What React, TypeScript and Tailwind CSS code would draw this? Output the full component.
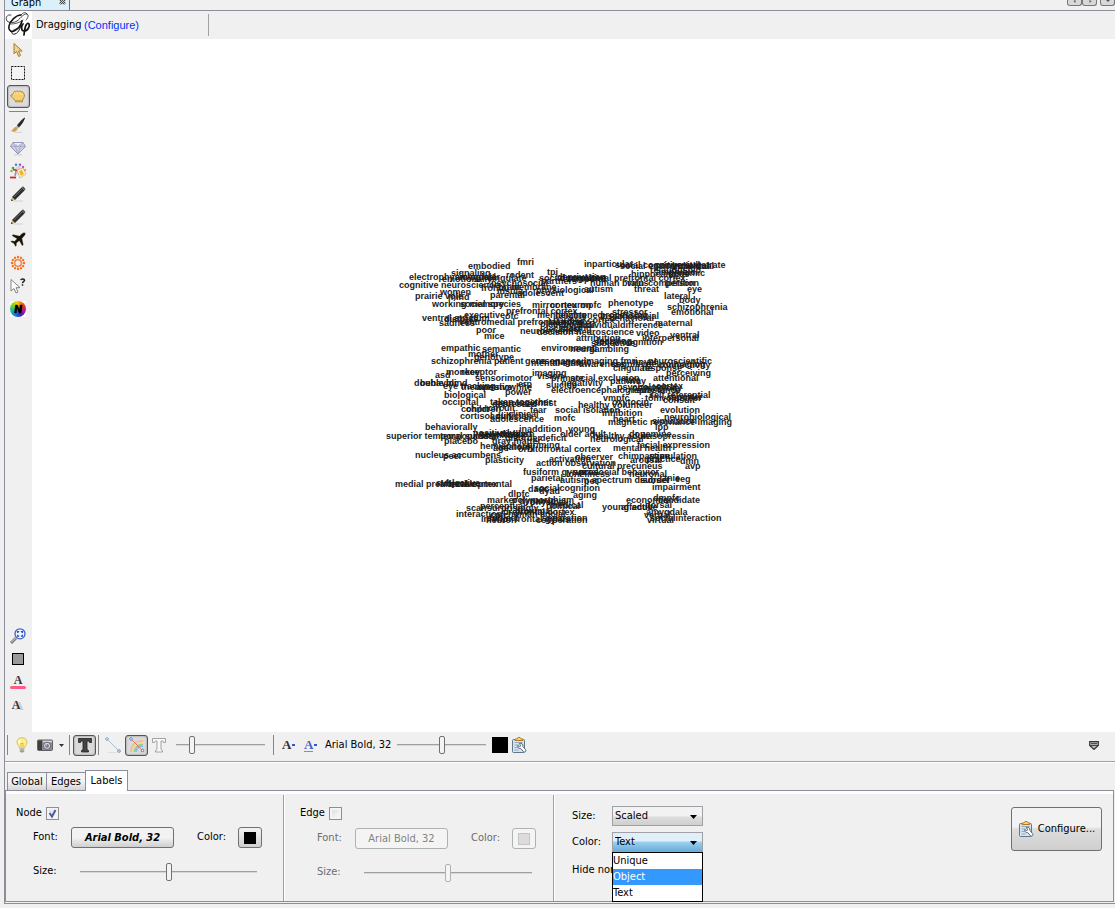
import type { ReactNode } from "react";
import clsx from "clsx";

const ORIGIN_X = 386;
const ORIGIN_Y = 257;

type Label = [number, number, string];

const labels: Label[] = [
  [517, 261, "fmri"], [468, 265, "embodied"], [451, 272, "signaling"],
  [409, 276, "electrophysiological"], [442, 278, "emotionally"], [506, 274, "rodent"],
  [547, 271, "tpj"], [399, 284, "cognitive neuroscience"], [487, 277, "cingulate"],
  [455, 276, "amygdalar"], [539, 277, "social cognitive"], [491, 282, "psychosocial"],
  [481, 287, "frontal"], [498, 286, "brain"], [511, 286, "membrane"], [490, 294, "parental"],
  [497, 290, "insula"], [517, 292, "adolescent"], [440, 291, "women"],
  [415, 295, "prairie vole"], [448, 296, "mind"], [536, 289, "physiological"],
  [560, 277, "dorsolateral prefrontal cortex"], [541, 280, "partners"],
  [557, 276, "deprivation"], [568, 278, "temporal"], [590, 282, "human brain"],
  [584, 288, "autism"], [627, 282, "virus"], [584, 263, "inparticular"],
  [620, 265, "social environmental"], [615, 264, "social cognitive substrate"],
  [655, 264, "congenital"], [672, 265, "individual"],
  [631, 273, "hippocampus"], [650, 269, "relationship"], [656, 271, "amphibic"],
  [668, 272, "genomic"], [648, 282, "competition"], [665, 282, "person"],
  [634, 288, "threat"], [687, 288, "eye"], [664, 295, "lateral"], [679, 299, "body"],
  [667, 306, "schizophrenia"], [671, 311, "emotional"],
  [432, 303, "working memory"], [460, 303, "social species"], [532, 304, "mirror neuron"],
  [550, 304, "cortex"], [580, 304, "mpfc"], [608, 302, "phenotype"],
  [506, 310, "prefrontal cortex"], [464, 314, "executive"], [505, 315, "ofc"],
  [537, 314, "mentalizing"], [555, 314, "heightened"], [612, 311, "stressor"],
  [553, 319, "parietal cortex"], [602, 315, "psychosocial"], [609, 317, "behavioral"],
  [600, 314, "processing"], [422, 317, "ventral striatum"], [444, 318, "distress"],
  [439, 322, "sadness"], [459, 321, "ventromedial prefrontal cortex"],
  [540, 323, "placebo"], [548, 321, "learning"], [553, 324, "individual"],
  [578, 324, "individualdifference"], [655, 322, "maternal"],
  [476, 329, "poor"], [520, 330, "neuroscientist"], [537, 331, "decision neuroscience"],
  [543, 328, "decision"], [560, 327, "making"], [484, 335, "mice"],
  [576, 337, "attribution"], [594, 341, "social cognition"], [591, 342, "subjective"],
  [597, 340, "learning"], [636, 332, "video"], [642, 337, "interpersonal"],
  [670, 334, "ventral"], [541, 347, "environment"], [570, 348, "neural"],
  [589, 348, "gambling"], [441, 347, "empathic"], [482, 348, "semantic"],
  [468, 353, "mother"], [474, 356, "genotype"], [431, 360, "schizophrenia patient"],
  [525, 360, "gene"], [531, 362, "mental state"], [536, 360, "resonance imaging fmri"],
  [552, 361, "magnetic"], [579, 363, "awareness"], [611, 363, "cognitive"],
  [613, 367, "cingulate"], [633, 361, "novel"], [648, 360, "neuroscientific"],
  [646, 363, "neuroimaging"], [658, 364, "connectivity"], [642, 367, "response"],
  [666, 372, "perceiving"], [653, 377, "attentional"],
  [446, 371, "monkey"], [461, 371, "receptor"], [435, 374, "asd"],
  [475, 377, "sensorimotor"], [532, 372, "imaging"], [537, 375, "vision"],
  [551, 377, "primate"], [570, 377, "social exclusion"], [610, 380, "pathway"],
  [625, 379, "late"], [414, 382, "double blind"], [420, 382, "behavior"],
  [443, 385, "eye tracking"], [461, 386, "therapeutic"], [476, 386, "aversive"],
  [509, 386, "white"], [518, 383, "erp"], [546, 384, "suicide"], [561, 382, "negativity"],
  [617, 386, "psychological"], [632, 387, "psychology"], [656, 385, "cortex"],
  [444, 394, "biological"], [505, 391, "power"], [551, 389, "electroencephalography"],
  [636, 389, "substance"], [442, 401, "occipital"], [490, 401, "taken together"],
  [495, 402, "neuroscientist"], [492, 403, "depressed"], [603, 397, "vmpfc"],
  [649, 394, "self referential"], [645, 397, "tom"], [661, 397, "volunteer"],
  [663, 399, "consult"], [668, 396, "reporter"], [578, 404, "healthy volunteer"],
  [612, 401, "oxytocin"], [461, 408, "cohort"], [466, 408, "children"],
  [488, 407, "circuit"], [530, 409, "fear"], [555, 409, "social isolation"],
  [602, 412, "inhibition"], [660, 409, "evolution"], [460, 415, "cortisol"],
  [490, 415, "adult"], [508, 413, "clinical"], [496, 415, "clinician"],
  [490, 418, "adolescence"], [554, 417, "mofc"], [613, 418, "heart"],
  [664, 416, "neurobiological"], [608, 421, "magnetic resonance imaging"],
  [652, 420, "simulation"], [655, 426, "lpp"],
  [425, 426, "behaviorally"], [519, 428, "inaddition"], [568, 428, "young"],
  [386, 435, "superior temporal sulcus"], [440, 435, "tempoparietal"],
  [473, 432, "positively"], [479, 433, "genetically"], [480, 434, "cognitive"],
  [500, 433, "disgust"], [513, 433, "learn"], [444, 440, "placebo"],
  [492, 440, "gray matter"], [505, 437, "disorder"], [540, 437, "deficit"],
  [560, 433, "older adult"], [593, 435, "healthy adult"], [590, 438, "neurological"],
  [629, 433, "dopamine"], [642, 435, "vasopressin"],
  [637, 444, "facial expression"], [480, 445, "hemisphere"], [498, 446, "anatomy"],
  [493, 447, "age"], [527, 444, "priming"], [518, 448, "orbitofrontal cortex"],
  [613, 447, "mental health"], [415, 454, "nucleus accumbens"], [443, 455, "peer"],
  [485, 459, "plasticity"], [549, 458, "activation"], [575, 456, "observer"],
  [618, 455, "chimpanzee"], [649, 455, "stimulation"], [630, 459, "arousal"],
  [646, 458, "practice"], [680, 460, "dmn"], [536, 462, "action observation"],
  [582, 465, "cultural precuneus"], [685, 465, "avp"],
  [523, 471, "fusiform gyrus"], [573, 471, "social"], [579, 471, "prosocial behavior"],
  [566, 473, "loneliness"], [629, 473, "neuronal"], [531, 477, "parietal"],
  [560, 479, "autism spectrum disorder"], [584, 480, "pet"], [640, 479, "subset"],
  [664, 477, "tnie"], [675, 478, "eeg"], [395, 483, "medial prefrontal cortex"],
  [436, 482, "subjective"], [440, 483, "affective"], [449, 483, "developmental"],
  [528, 488, "dacc"], [534, 487, "socialcognition"], [539, 490, "dyad"],
  [652, 486, "impairment"], [573, 494, "aging"], [508, 493, "dlpfc"],
  [487, 499, "marker"], [512, 499, "polymorphism"], [519, 500, "dynamic"],
  [480, 505, "perceptual"], [466, 507, "scan"], [487, 507, "surprisingly"],
  [530, 501, "physical"], [550, 504, "medical"], [546, 505, "political"],
  [626, 499, "economic"], [653, 497, "dmpfc"], [658, 499, "candidate"],
  [602, 506, "young adult"], [621, 506, "affective"], [645, 504, "dorsal"],
  [503, 511, "prefrontal cortex"], [515, 510, "proximal"], [456, 513, "interaction"],
  [490, 514, "cpfc"], [508, 513, "human social"], [487, 517, "subject"],
  [481, 518, "inferior frontal gyrus"], [486, 519, "neuron"], [536, 519, "cooperation"],
  [542, 517, "separation"], [646, 511, "amygdala"], [644, 514, "verbal"],
  [650, 517, "socialinteraction"], [647, 519, "virtual"],
];

function Svg({ children }: { children: ReactNode }) {
  return (
    <svg viewBox="0 0 16 16" className="size-4 shrink-0" fill="none" aria-hidden="true">
      {children}
    </svg>
  );
}

function Tool({ label, pressed, children }: { label: string; pressed?: boolean; children: ReactNode }) {
  return (
    <button
      type="button"
      aria-label={label}
      aria-pressed={pressed}
      className={clsx(
        "flex h-[23px] w-[23px] shrink-0 items-center justify-center pr-px pb-px",
        pressed && "rounded-[3px] border border-[#555] bg-[#dcdcdc] shadow-[inset_0_0_2px_#777]",
      )}
    >
      {children}
    </button>
  );
}

function Divider({ className }: { className?: string }) {
  return <div className={clsx("h-5 w-px shrink-0 bg-[#858585]", className)} />;
}

function Slider({ label, value, disabled, className }: { label: string; value: number; disabled?: boolean; className?: string }) {
  return (
    <input
      type="range"
      aria-label={label}
      defaultValue={value}
      disabled={disabled}
      className={clsx(
        "h-[19px] shrink-0 appearance-none bg-transparent",
        "[&::-webkit-slider-runnable-track]:h-[2px] [&::-webkit-slider-runnable-track]:border-b [&::-webkit-slider-runnable-track]:border-[#d8d8d8] [&::-webkit-slider-runnable-track]:bg-[#a0a0a0]",
        "[&::-webkit-slider-thumb]:-mt-[8px] [&::-webkit-slider-thumb]:h-[18px] [&::-webkit-slider-thumb]:w-[6px] [&::-webkit-slider-thumb]:appearance-none [&::-webkit-slider-thumb]:rounded-[2px] [&::-webkit-slider-thumb]:border [&::-webkit-slider-thumb]:bg-[#f4f4f4]",
        disabled ? "[&::-webkit-slider-thumb]:border-[#b0b0b0]" : "[&::-webkit-slider-thumb]:border-[#707070]",
        className,
      )}
    />
  );
}

function PencilIcon() {
  return (
    <Svg>
      <path d="M3 15h10" stroke="#d2d2d2" />
      <path d="M1 15l1-4 3 3z" fill="#d9bd7c" />
      <path d="M1 15l.5-2 1.500 1.500z" fill="#222" />
      <path d="M2 11L11.500 1.500l3 3L5 14z" fill="#2e2e2e" />
      <path d="M4 11l8-8" stroke="#666" />
      <path d="M11.500 1.500l1.500-1.200 2.600 2.600-1.200 1.500z" fill="#555" />
    </Svg>
  );
}

function ClipboardIcon() {
  return (
    <Svg>
      <rect x="1.500" y="2.500" width="12" height="13" rx="1" fill="#d7e3ef" stroke="#60778e" />
      <path d="M3.500 5.500h8M3.500 8h4M3.500 10.500h3M3.500 13h4" stroke="#8fa9c4" />
      <path d="M4 3.500V2h2l1-1.500h2L10 2h2v1.500z" fill="#f5d58b" stroke="#b67a1c" />
      <path d="M8.300 6.500c2.300-.8 4.200.8 3.600 3l2.800 3.300c1 1.400-1 3-2.200 1.900L9.700 11.500c-2 .5-3.500-1-2.900-3l1.900 1.200 1.200-.9z" fill="#fff" stroke="#4d5d6c" strokeWidth=".9" />
    </Svg>
  );
}

function GephiLogo() {
  return (
    <svg viewBox="0 0 27 27" className="size-[27px] shrink-0" fill="none" stroke="#111" strokeLinecap="round" aria-label="Gephi" role="img">
      <path d="M6 4C2 3 0 7 2 10c2 2 7 2 10 0 4-3 7-8 10-7 2 1 1 4-1 6" strokeWidth=".8" />
      <path d="M16 4C11 4 5 10 4 15c-1 5 3 7 7 4 3-2 5-6 6-9" strokeWidth="1.500" />
      <path d="M17 10c-1 5-3 12-7 13-4 1-4-3-1-4 4-2 7-3 9-6" strokeWidth="1" />
      <path d="M16 4c2-3 5-3 6-1M6 13c4 0 8-1 12-4" strokeWidth=".7" />
      <path d="M18 13c-2 2-2 7 1 7 4 0 6-5 5-7-2-2-4 1-5 11" strokeWidth="1.700" />
    </svg>
  );
}

function FireballIcon() {
  const angles = [0, 30, 60, 90, 120, 150, 180, 210, 240, 270, 300, 330];
  return (
    <Svg>
      <circle cx="8" cy="8" r="3.200" stroke="#f56a2a" strokeWidth="1.100" />
      {angles.map((a) => (
        <g key={a} transform={`rotate(${a} 8 8)`} fill="#f9701c">
          <circle cx="8" cy="2" r="1.200" />
          <circle cx="8" cy="3.900" r=".5" />
        </g>
      ))}
    </Svg>
  );
}

function LeftTools() {
  return (
    <div className="flex w-[27px] shrink-0 flex-col items-center">
      <Tool label="Direct selection">
        <Svg>
          <path d="M4 1.500v10.300l2.600-2.300 2 5 2-1-2-4.500h3.600z" fill="#f1d28a" stroke="#a87935" strokeWidth="1" />
        </Svg>
      </Tool>
      <Tool label="Rectangle selection">
        <Svg><rect x="1.500" y="1.500" width="13" height="13" fill="#f4f4f4" stroke="#111" strokeDasharray="2 1" /></Svg>
      </Tool>
      <Tool label="Drag" pressed>
        <Svg>
          <path d="M3.500 4.500c.5-1.500 1.800-1.500 2.400-.6C6.500 2.500 8 2.500 8.600 3.700c.8-1.200 2.200-.9 2.500.2 1.200-.7 2.200.1 2.100 1.200 1.700 0 1.300 3 .8 4.600L12.500 12v1.800H5.500V12.500C3.500 11.500 2 9.500 1 8c-.4-1.200.6-1.700 1.700-1z" fill="#f4cf73" stroke="#ae8030" strokeWidth=".9" />
          <path d="M4.500 5.500l-1 1.500M7 4.500v1.300M9.800 4.800V6M12 5.800v1" stroke="#fff1bd" />
          <path d="M6 12.500h6" stroke="#d9a53e" />
        </Svg>
      </Tool>
      <div className="flex h-[6px] w-[19px] shrink-0 items-center"><div className="h-px w-full bg-[#858585]" /></div>
      <Tool label="Painter">
        <Svg>
          <path d="M4 15.300h8" stroke="#d4d4d4" />
          <path d="M14.800.5c-2 1-6 5-7.800 8l2 2c3-3 5.500-7 6-9.500z" fill="#282828" />
          <path d="M7 8.500l2 2-1.500 1.200-1.700-1.600z" fill="#aaa" />
          <path d="M6 10c-2 0-2 2-5 4 2 1.300 6 .8 6.500-2.300z" fill="#c7a251" />
        </Svg>
      </Tool>
      <Tool label="Sizer">
        <Svg>
          <path d="M4 14.800h8" stroke="#ccc" />
          <path d="M3 2.500h10l2.500 4L8 14 .5 6.500z" fill="#cdcde6" stroke="#8585a6" strokeWidth=".8" />
          <path d="M.5 6.500h15M3 2.500l2.500 4L8 14l2.500-7.500L13 2.500M5.500 6.500L8 2.500l2.500 4" stroke="#9898b9" strokeWidth=".6" />
          <path d="M4 3.200h7L8 5z" fill="#fff" />
        </Svg>
      </Tool>
      <Tool label="Brush">
        <Svg>
          <circle cx="3" cy="5" r="1.300" fill="#3da85b" /><circle cx="6" cy="1.800" r="1.200" fill="#527fcc" />
          <circle cx="10" cy="1.800" r="1.200" fill="#7856c5" /><circle cx="13" cy="4" r="1.200" fill="#bd4ed1" />
          <circle cx="1.500" cy="8" r="1.200" fill="#65c73d" /><circle cx="15" cy="7" r="1" fill="#e36c9d" />
          <path d="M5 5l4-3 2 2-1 7-5 1z" fill="#d4d7de" />
          <path d="M7 7l6-2 3 6-6 4z" fill="#fff6d7" stroke="#cba45a" strokeWidth=".7" />
          <path d="M9 8l3-1 2 4-3 2z" fill="#f4b225" />
          <path d="M3 6.500l4 1" stroke="#cf2b2b" strokeWidth="1.300" />
          <path d="M6 8l-1 5" stroke="#8f9099" strokeWidth="1.300" />
          <path d="M0 14.500h6" stroke="#cf2b2b" strokeWidth="1.800" />
        </Svg>
      </Tool>
      <Tool label="Node pencil"><PencilIcon /></Tool>
      <Tool label="Edge pencil"><PencilIcon /></Tool>
      <Tool label="Shortest path">
        <Svg>
          <path d="M15.200 1C13.800.4 12.500 1 11 2.600L9.500 4 3 2.600l-1 1.200 5 2.900-2.500 2.600-2.800-.5-1 1 3.200 1.800 1.600 3 1-1 0-2.600L9.300 8.800l2.900 5 1.200-1L12 6.500l1.500-1.700C15 3.300 15.700 2 15.200 1z" fill="#15120d" stroke="#b18a45" strokeWidth=".3" />
        </Svg>
      </Tool>
      <Tool label="Heat map"><FireballIcon /></Tool>
      <Tool label="Edit">
        <Svg>
          <path d="M1 1.500V13l3-2.500 2 4.500 2-1-2-4.300h4z" fill="#fff" stroke="#777" strokeWidth=".9" />
          <path d="M10.800 2.200c.3-1.700 3.700-1.700 3.700.1 0 1.500-2 1.300-2 2.900M12.500 6.300v1.500" stroke="#222" strokeWidth="1.500" />
        </Svg>
      </Tool>
      <Tool label="Neighbor colours">
        <div className="flex size-4 items-center justify-center bg-white">
          <div className="flex size-4 items-center justify-center rounded-full bg-[conic-gradient(#ffb700,#e94420,#b8189a,#3b20b5,#167ce0,#18b9a1,#8bd21b,#ffd700)]">
            <svg viewBox="0 0 10 10" className="size-[10px]" aria-hidden="true">
              <path d="M1.500 9l1-8h2l2 5L7.200 1h2l-1 8h-2l-2.200-5-.7 5z" fill="#000" stroke="#000" strokeWidth=".5" />
            </svg>
          </div>
        </div>
      </Tool>
      <div className="flex-1" />
      <Tool label="Centre on graph">
        <Svg>
          <path d="M1 15l5-5" stroke="#777" strokeWidth="2.800" /><path d="M1.300 14.300l4.500-4.500" stroke="#ddd" />
          <circle cx="10" cy="5.800" r="5" fill="#eef4ff" stroke="#4263c5" strokeWidth="1.300" />
          <path d="M7.700 5V3.600h1.500M10.900 3.600h1.500V5M12.400 6.700v1.500h-1.500M9.200 8.200H7.700V6.700" stroke="#2147c3" strokeWidth="1.200" />
        </Svg>
      </Tool>
      <Tool label="Background colour"><div className="size-3 border border-black bg-[#999]" /></Tool>
      <Tool label="Reset label colours">
        <span className="flex w-4 flex-col items-center font-['Liberation_Serif',serif] text-[12px] leading-[11px] font-bold text-[#333]">
          A<i className="h-[3px] w-full rounded-sm bg-[#ff5a8a]" />
        </span>
      </Tool>
      <Tool label="Reset label visibility">
        <span className="pr-1 font-['Liberation_Serif',serif] text-[12px] leading-4 font-bold text-[#333] [text-shadow:3px_1px_0_#ccc]">A</span>
      </Tool>
      <div className="h-[15px] shrink-0" />
    </div>
  );
}

function GraphCanvas() {
  return (
    <main className="flex min-w-0 flex-1 items-center justify-center overflow-hidden bg-white pt-3 pr-8">
      <div className="relative h-[268px] w-[343px] shrink-0 font-['Liberation_Sans',Arial,sans-serif] text-[9px] leading-[9px] font-bold text-[#1c1c1c]">
        {labels.map(([x, y, text], i) => (
          <span key={i} className="absolute whitespace-nowrap" style={{ left: x - ORIGIN_X, top: y - ORIGIN_Y - 4 }}>
            {text}
          </span>
        ))}
      </div>
    </main>
  );
}

function ViewBar() {
  return (
    <div className="flex h-[30px] shrink-0 items-center border-b border-[#a0a0a0] pr-4 pb-[3px] pl-[2px]">
      <Divider />
      <button type="button" aria-label="Background light" className="ml-[6px]">
        <Svg>
          <path d="M8 .7C4.500.7 2.700 3 3 5.700 3.300 8 5.300 9 5.500 11h5c.2-2 2.200-3 2.500-5.300C13.300 3 11.500.7 8 .7z" fill="#ffee91" stroke="#cfb04b" strokeWidth=".8" />
          <path d="M6 3c-1 1-1 2-.5 3.500" stroke="#fff" strokeWidth="1.500" /><path d="M7 10V6l1 1 1-1v4" stroke="#d3a62c" strokeWidth=".7" />
          <path d="M5.800 11.500h4.400v3L9 15.500H7l-1.200-1z" fill="#9a9a9a" /><path d="M5.800 13h4.400" stroke="#ddd" strokeWidth=".7" />
        </Svg>
      </button>
      <button type="button" aria-label="Take screenshot" className="ml-[7px] flex items-center gap-[6px]">
        <Svg>
          <rect x=".5" y="3" width="15" height="10.500" rx="1" fill="#8c8c8c" stroke="#626262" />
          <rect x="1" y="3.500" width="4" height="9.500" fill="#3f3f3f" /><path d="M6 4.500h9" stroke="#ddd" strokeWidth="1.500" />
          <circle cx="10" cy="8.800" r="3.600" fill="#d8d8df" stroke="#666" /><circle cx="10" cy="8.800" r="1.900" fill="#6773ae" />
          <circle cx="9.500" cy="8" r=".6" fill="#fff" />
        </Svg>
        <svg viewBox="0 0 5 3" className="h-[3px] w-[5px]" aria-hidden="true"><path d="M0 0h5L2.500 3z" fill="#333" /></svg>
      </button>
      <Divider className="ml-[5px]" />
      <button type="button" aria-label="Show node labels" aria-pressed="true" className="ml-[3px] flex h-[21px] w-[23px] items-center justify-center rounded-[3px] border border-[#555] bg-[#dadada] shadow-[inset_0_0_2px_#777]">
        <Svg><path d="M1.500 1.500h13v4h-2l-.7-1.500H10v8.500l1.500 1V15h-7v-1.500l1.500-1V4H4.200L3.500 5.500h-2z" fill="#444" stroke="#222" strokeWidth=".8" /></Svg>
      </button>
      <Divider className="ml-[2px]" />
      <button type="button" aria-label="Show edges" className="ml-[6px]">
        <Svg>
          <path d="M2 2l12 12" stroke="#a8bfd4" /><circle cx="2" cy="2" r="1.300" fill="#fff" stroke="#78a3cf" /><circle cx="14" cy="14" r="1.300" fill="#fff" stroke="#6b91c0" /><path d="M3 15.500h9" stroke="#ddd" />
        </Svg>
      </button>
      <button type="button" aria-label="Edges take node colour" aria-pressed="true" className="ml-[4px] flex h-[21px] w-[23px] items-center justify-center rounded-[3px] border border-[#555] bg-[#dadada] shadow-[inset_0_0_2px_#777]">
        <Svg>
          <path d="M2 15C2 8 7 3.500 14 4" stroke="#f3b9a6" strokeWidth="1.800" />
          <path d="M3.800 15C4 9.500 8 5.500 14 5.800" stroke="#eddf7f" strokeWidth="1.700" />
          <path d="M5.500 15c.3-4.500 3.500-7.500 8.500-7.500" stroke="#91cd91" strokeWidth="1.700" />
          <path d="M7.200 15c.3-3.500 2.800-5.800 6.800-5.800" stroke="#8bbaf0" strokeWidth="1.700" />
          <path d="M2 2l12 12" stroke="#e57855" /><circle cx="2" cy="2" r="1.300" fill="#fff" stroke="#5d8ecf" /><circle cx="13.500" cy="13.500" r="1.300" fill="#fff" stroke="#526fc3" />
        </Svg>
      </button>
      <button type="button" aria-label="Show edge labels" className="ml-[3px]">
        <Svg><path d="M1.500 1.500h13v4h-2l-.7-1.500H10v8.500l1.500 1V15h-7v-1.500l1.500-1V4H4.200L3.500 5.500h-2z" fill="#f8f8f8" stroke="#999" strokeWidth=".9" /></Svg>
      </button>
      <Slider label="Edge weight scale" value={16} className="ml-[9px] w-[89px]" />
      <Divider className="ml-2" />
      <button type="button" aria-label="Label size mode" className="ml-2 flex w-[15px] items-center gap-px font-['Liberation_Serif',serif] text-[13px] leading-4 font-bold text-[#333]">
        A<i className="h-[2px] w-[3px] shrink-0 bg-[#3658bd]" />
      </button>
      <button type="button" aria-label="Label colour mode" className="ml-[7px] flex w-[15px] items-center gap-px font-['Liberation_Serif',serif] text-[13px] leading-4 font-bold text-[#3f65c8]">
        <span className="border-b border-[#6f8fe0] leading-3">A</span><i className="h-[2px] w-[3px] shrink-0 bg-[#3658bd]" />
      </button>
      <button type="button" className="ml-[6px] w-[64px] text-left whitespace-nowrap">Arial Bold, 32</button>
      <Slider label="Label size" value={50} className="ml-2 w-[89px]" />
      <button type="button" aria-label="Default label colour" className="ml-[6px] size-4 bg-black" />
      <button type="button" aria-label="Label attributes" className="ml-[3px]"><ClipboardIcon /></button>
      <div className="flex-1" />
      <button type="button" aria-label="Collapse panel">
        <svg viewBox="0 0 10 9" className="h-[9px] w-[10px]" fill="none" aria-hidden="true">
          <path d="M.7.700h8.600v3.800L5 8.400.7 4.500z" fill="#bbb" stroke="#333" strokeWidth="1.200" /><path d="M2 2.600h6M1 4.500h8" stroke="#444" />
        </svg>
      </button>
    </div>
  );
}

function Swatch({ disabled }: { disabled?: boolean }) {
  return (
    <button
      type="button"
      aria-label="Label colour"
      disabled={disabled}
      className={clsx("flex h-[21px] w-6 shrink-0 items-center justify-center rounded-[3px] border", disabled ? "border-[#adb2b5] bg-[#f4f4f4]" : "border-[#707070] bg-linear-to-b from-[#f2f2f2] to-[#cfcfcf]")}
    >
      <span className={clsx("size-3", disabled ? "border border-[#c4c4c4] bg-[#dcdcdc]" : "bg-black")} />
    </button>
  );
}

function LabelGroup({ name, disabled }: { name: string; disabled?: boolean }) {
  const muted = disabled && "text-[#6d6d6d]";
  return (
    <fieldset className={clsx("flex h-[106px] shrink-0 flex-col border-r border-[#a0a0a0] pt-3", disabled ? "w-[269px] pl-[15px]" : "w-[278px] pl-[10px]")}>
      <label className="flex h-[13px] items-center gap-1">
        <span className={disabled ? "w-[25px]" : "w-[26px]"}>{name}</span>
        <span className="relative flex size-[13px]">
          <input type="checkbox" defaultChecked={!disabled} className="peer size-[13px] appearance-none border border-[#8e8f8f] bg-linear-to-br from-[#d5d9df] to-white outline-2 -outline-offset-3 outline-[#f4f4f4]" />
          <svg viewBox="0 0 13 13" className="pointer-events-none absolute inset-0 hidden peer-checked:block" fill="none" aria-hidden="true"><path d="M3.500 6l2.500 3.500L9.500 3" stroke="#4b5f9f" strokeWidth="2" /></svg>
        </span>
      </label>
      <div className={clsx("flex h-[21px] items-center pl-[17px]", disabled ? "mt-2" : "mt-[7px]", muted)}>
        <span className="w-[38px]">Font:</span>
        <button
          type="button"
          disabled={disabled}
          className={clsx("h-[21px] rounded-[3px] border leading-4 whitespace-nowrap", disabled ? "w-[93px] border-[#adb2b5] bg-[#f4f4f4] text-[#838383]" : "w-[103px] border-[#707070] bg-linear-to-b from-[#f2f2f2] from-50% to-[#cfcfcf] font-bold italic")}
        >
          Arial Bold, 32
        </button>
        <span className="ml-[23px] w-[41px]">Color:</span>
        <Swatch disabled={disabled} />
      </div>
      <div className={clsx("mt-[13px] flex h-[21px] items-center pl-[17px]", muted)}>
        <span className="w-[47px]">Size:</span>
        <Slider label={`${name} label size`} value={50} disabled={disabled} className={disabled ? "w-[168px]" : "w-[177px]"} />
      </div>
    </fieldset>
  );
}

function Select({ id, value, open }: { id: string; value: string; open?: boolean }) {
  return (
    <span className="relative block w-[91px]">
      <select
        id={id}
        defaultValue={value}
        className={clsx(
          "block h-5 w-full appearance-none border border-[#a0a0a6] pl-[2px] leading-4",
          open ? "bg-linear-to-b from-[#dff0fa] from-45% via-[#9bd0ec] via-50% to-[#6aaeda]" : "bg-linear-to-b from-[#f2f2f2] from-50% via-[#dedede] via-55% to-[#cfcfcf]",
        )}
      >
        <option>{value}</option>
      </select>
      <svg viewBox="0 0 7 4" className="pointer-events-none absolute top-[9px] right-[6px] h-1 w-[7px]" aria-hidden="true"><path d="M0 0h7L3.500 4z" /></svg>
      {open && (
        <ul role="listbox" aria-label="Color" className="absolute top-5 left-0 z-10 w-full border border-black bg-white leading-4">
          <li role="option" aria-selected="false" className="h-4">Unique</li>
          <li role="option" aria-selected="true" className="h-4 bg-[#3399ff] text-white">Object</li>
          <li role="option" aria-selected="false" className="h-4">Text</li>
        </ul>
      )}
    </span>
  );
}

function SettingsPanel() {
  return (
    <section className="shrink-0 border-t border-white pt-[7px]">
      <div role="tablist" className="flex h-5 items-end pl-[2px]">
        <button role="tab" aria-selected="false" type="button" className="h-[18px] w-10 border border-b-0 border-[#8c8e99] bg-linear-to-b from-[#f3f3f3] from-50% to-[#d5d5d5] leading-4">Global</button>
        <button role="tab" aria-selected="false" type="button" className="h-[18px] w-[39px] border border-b-0 border-l-0 border-[#8c8e99] bg-linear-to-b from-[#f3f3f3] from-50% to-[#d5d5d5] leading-4">Edges</button>
        <button role="tab" aria-selected="true" type="button" className="z-10 -mb-px -ml-px h-[21px] w-[43px] border border-b-0 border-[#8c8e99] bg-white pb-px leading-4">Labels</button>
      </div>
      <div className="mr-[1px] flex border border-[#8c8e99] pt-1 shadow-[inset_0_3px_0_#fff]">
        <LabelGroup name="Node" />
        <div className="w-px shrink-0 bg-white" />
        <LabelGroup name="Edge" disabled />
        <div className="w-px shrink-0 bg-white" />
        <div className="flex min-w-0 flex-1 items-start justify-between pt-[11px] pr-[11px] pl-[17px]">
          <div className="grid grid-cols-[40px_91px] gap-y-[6px]">
            <label htmlFor="size-mode" className="h-5 leading-5">Size:</label>
            <Select id="size-mode" value="Scaled" />
            <label htmlFor="color-mode" className="h-5 leading-5">Color:</label>
            <Select id="color-mode" value="Text" open />
            <span className="mt-[2px] h-5 leading-5 whitespace-nowrap">Hide nor</span>
          </div>
          <button type="button" className="mt-px flex h-[44px] w-[91px] items-center justify-center gap-1 rounded-[3px] border border-[#707070] bg-linear-to-b from-[#f2f2f2] from-45% via-[#dddddd] via-50% to-[#cfcfcf]">
            <ClipboardIcon /> Configure...
          </button>
        </div>
      </div>
      <div className="mt-px h-px bg-[#8c8e99]" />
    </section>
  );
}

function WindowButton({ label, path }: { label: string; path: string }) {
  return (
    <button type="button" aria-label={label} className="flex h-[6px] w-[15px] items-start justify-center rounded-b-[3px] border border-t-0 border-[#777] bg-[#d8d8d8]">
      <svg viewBox="0 0 6 3" className="h-[3px] w-[6px]" aria-hidden="true"><path d={path} fill="#555" /></svg>
    </button>
  );
}

export default function App() {
  return (
    <div className="flex h-screen flex-col overflow-hidden bg-[#f0f0f0] pb-1 pl-1 font-['DejaVu_Sans_Condensed','Noto_Sans',sans-serif] text-[11px] text-black">
      <div className="flex min-h-0 flex-1 flex-col border-l border-[#8c8e99]">
        <div className="flex h-[11px] shrink-0 items-start border-b border-[#8c8e99]">
          <button type="button" className="flex h-[10px] w-[65px] items-end justify-between overflow-hidden border-r border-[#3c7fb1] bg-[#dcf0fa] pr-[3px] pl-[6px] leading-[14px]">
            <span>Graph</span>
            <svg viewBox="0 0 7 7" className="mb-[5px] size-[7px]" fill="none" aria-hidden="true"><path d="M1 1l5 5M6 1L1 6" stroke="#444" strokeWidth="2.400" /><path d="M1 1l5 5M6 1L1 6" stroke="#eee" strokeWidth=".8" /></svg>
          </button>
          <div className="flex-1" />
          <WindowButton label="Scroll left" path="M3.500 0v3L1.500 1z" />
          <WindowButton label="Scroll right" path="M2.500 0v3l2-2z" />
          <div className="w-[3px]" />
          <WindowButton label="Show opened documents" path="M1 0h4L3 2z" />
        </div>
        <div className="flex h-7 shrink-0 items-center">
          <div className="h-full bg-white"><GephiLogo /></div>
          <span className="ml-1 w-[48px]">Dragging</span>
          <a href="#configure" className="w-[54px] font-['Liberation_Sans',Arial,sans-serif] whitespace-nowrap text-[#0033ff]">(Configure)</a>
          <div className="ml-[70px] h-[22px] w-px bg-[#a0a0a0]" />
        </div>
        <div className="flex min-h-0 flex-1">
          <LeftTools />
          <GraphCanvas />
        </div>
        <ViewBar />
        <SettingsPanel />
      </div>
    </div>
  );
}
